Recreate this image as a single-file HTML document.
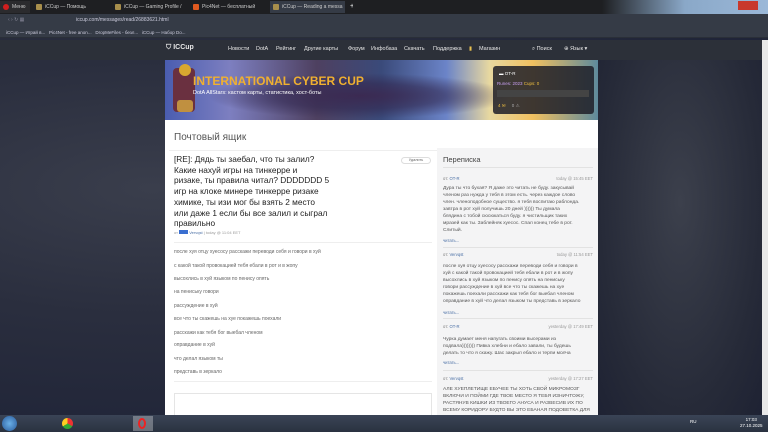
<!DOCTYPE html>
<html><head><meta charset="utf-8"><style>
*{margin:0;padding:0;box-sizing:border-box}
body{width:768px;height:432px;overflow:hidden;font-family:"Liberation Sans","DejaVu Sans",sans-serif;background:#23283a;position:relative}
.abs{position:absolute}
.bg{left:0;top:37px;width:762px;height:378px;background:radial-gradient(ellipse at 20% 40%,#3a3e4c 0%,#2a2e3e 40%,#1b2035 100%)}
.bgr{left:598px;top:60px;width:164px;height:355px;background:radial-gradient(ellipse at 50% 40%,#3c404c,#262a38 70%,#1e2233)}
.tabs{left:0;top:0;width:768px;height:14px;background:#1e1f22}
.tab{position:absolute;top:1px;height:12px;font-size:5px;color:#ccc;line-height:12px;padding-left:12px;white-space:nowrap;overflow:hidden}
.tab i{position:absolute;left:3px;top:3px;width:6px;height:6px;border-radius:1px;background:#a88f4c}
.addr{left:0;top:14px;width:768px;height:13px;background:#353b46;font-size:5px;color:#ccd;line-height:13px}
.bm{left:0;top:27px;width:768px;height:11px;background:#353b46;font-size:4.5px;color:#ccd;line-height:11px;border-bottom:1px solid #2a2f38}
.nav{left:0;top:40px;width:762px;height:20px;background:#2c3039}
.nav span{position:absolute;top:6px;font-size:5.5px;color:#e6e6e6}
.banner{left:165px;top:60px;width:433px;height:60px;background:linear-gradient(90deg,#4a5db0 0%,#7d7fc0 15%,#4e4060 35%,#3a4a7a 50%,#6b84c8 65%,#e8d8a0 75%,#f0c060 85%,#5e8a9c 100%);overflow:hidden}
.main{left:165px;top:120px;width:433px;height:295px;background:#fff}
.side{left:437px;top:148px;width:161px;height:267px;background:#f4f4f5}
.msg{font-size:5px;color:#666;position:absolute;left:174px;line-height:6px;white-space:nowrap}
.si{position:absolute;left:443px;width:152px;font-size:4.9px;color:#555;line-height:7px;white-space:nowrap}
.sh{position:absolute;left:443px;width:150px;font-size:4.2px;color:#777}
.sh b{font-weight:normal;color:#4a6fa5}
.sh em{font-style:normal;float:right;color:#999}
.rd{position:absolute;left:443px;font-size:4.2px;color:#4a6fa5}
.ln{position:absolute;left:443px;width:150px;height:1px;background:#e2e2e2}
.task{left:0;top:415px;width:768px;height:17px;background:linear-gradient(#3a4456,#2a3240)}
</style></head><body>
<div class="abs bg"></div><div class="abs bgr"></div>
<div class="abs tabs">
<div class="tab" style="left:0;width:30px;background:#2b2b2e"><i style="background:#d01e1e;border-radius:50%"></i>Меню</div>
<div class="tab" style="left:33px;width:75px"><i></i>iCCup — Помощь</div>
<div class="tab" style="left:112px;width:75px"><i></i>iCCup — Gaming Profile /</div>
<div class="tab" style="left:190px;width:75px"><i style="background:#e05a20"></i>Pic4Net — бесплатный</div>
<div class="tab" style="left:270px;width:75px;background:#353b46"><i></i>iCCup — Reading a messa</div>
<div class="tab" style="left:348px;color:#fff;font-size:7px;padding-left:2px">+</div>
<div class="abs" style="left:353px;top:0;width:415px;height:14px;background:linear-gradient(90deg,#1e1f22,#1e1f22 60%,#8aa8c8 80%,#9bb8d8)"></div>
<div class="abs" style="left:738px;top:1px;width:20px;height:9px;background:#c8382c"></div>
</div>
<div class="abs addr"><span style="position:absolute;left:8px;color:#889">‹ › ↻ ▦</span><span style="position:absolute;left:76px">iccup.com/messages/read/26883621.html</span></div>
<div class="abs bm"><span style="position:absolute;left:6px">iCCup — Играй в... &nbsp; Pic4Net - free anon... &nbsp; DropMeFiles - безл... &nbsp; iCCup — Набор Do...</span></div>
<div class="abs nav">
<span style="left:166px;font-size:7px;top:4px;font-weight:bold">⛉ ICCup</span>
<span style="left:228px">Новости</span><span style="left:256px">DotA</span><span style="left:276px">Рейтинг</span><span style="left:304px">Другие карты</span><span style="left:348px">Форум</span><span style="left:371px">Инфобаза</span><span style="left:404px">Скачать</span><span style="left:433px">Поддержка</span><span style="left:469px;color:#e8c050">▮</span><span style="left:479px">Магазин</span>
<span style="left:532px">⌕ Поиск</span><span style="left:564px">⊕ Язык ▾</span>
</div>
<div class="abs banner">
<div class="abs" style="left:0;top:0;width:433px;height:60px;background:radial-gradient(ellipse at 45% 60%,#3b2a52 0%,rgba(50,40,80,.6) 25%,transparent 45%)"></div>
<div class="abs" style="left:8px;top:8px;width:22px;height:44px;background:#6a3040;border-radius:4px"></div>
<div class="abs" style="left:14px;top:4px;width:12px;height:12px;border-radius:50%;background:#d8a830"></div>
<div class="abs" style="left:12px;top:40px;width:16px;height:12px;border-radius:3px;background:#c09040"></div>
<div class="abs" style="left:28px;top:14px;font-size:12px;font-weight:bold;color:#f0b030;white-space:nowrap">INTERNATIONAL CYBER CUP</div>
<div class="abs" style="left:28px;top:30px;font-size:5.5px;color:#fff;white-space:nowrap">DotA AllStars: кастом карты, статистика, хост-боты</div>
<div class="abs" style="left:328px;top:6px;width:101px;height:48px;background:rgba(30,30,40,.85);border-radius:3px;font-size:4.5px;color:#fff">
<div style="position:absolute;left:6px;top:5px">▬ OT-R</div>
<div style="position:absolute;left:4px;top:15px;color:#c8a0f0">Runes: 2023 <span style="color:#f0c040">Cups: 0</span></div>
<div style="position:absolute;left:4px;top:24px;width:92px;height:7px;background:#444"></div>
<div style="position:absolute;left:5px;top:37px;color:#f0c040">4 ✉ &nbsp;&nbsp;&nbsp; <span style="color:#aaa">0 ⚠</span></div>
</div>
</div>
<div class="abs main">
<div class="abs" style="left:9px;top:12px;font-size:10px;color:#555">Почтовый ящик</div>
<div class="abs" style="left:4px;top:30px;width:429px;height:1px;background:#eee"></div>
<div class="abs" style="left:9px;top:34px;font-size:8.3px;line-height:10.7px;color:#222;white-space:nowrap">[RE]: Дядь ты заебал, что ты залил?<br>Какие нахуй игры на тинкерре и<br>ризаке, ты правила читал? DDDDDDD 5<br>игр на клоке минере тинкерре ризаке<br>химике, ты изи мог бы взять 2 место<br>или даже 1 если бы все залил и сыграл<br>правильно</div>
<div class="abs" style="left:9px;top:110px;font-size:4px;color:#999">от <span style="display:inline-block;width:9px;height:4px;background:#3a6fd0"></span> <span style="color:#4a6fa5">Vervqst</span> | today @ 11:04 EET</div>
<div class="abs" style="left:236px;top:37px;width:30px;height:7px;border:1px solid #ddd;border-radius:4px;font-size:3.8px;color:#666;text-align:center;line-height:5px">Удалить</div>
<div class="abs" style="left:9px;top:122px;width:258px;height:1px;background:#eee"></div>
<div class="abs" style="left:9px;top:261px;width:258px;height:1px;background:#eee"></div>
<div class="abs" style="left:9px;top:273px;width:258px;height:30px;border:1px solid #e5e5e5"></div>
</div>
<div class="msg" style="top:249px">после хуя отцу хуесосу расскажи переводи себя и говори в хуй</div>
<div class="msg" style="top:263px">с какой такой провокацией тебя ебали в рот и в жопу</div>
<div class="msg" style="top:276px">высохлись в хуй языком по пенису опять</div>
<div class="msg" style="top:289px">на пениську говори</div>
<div class="msg" style="top:303px">рассуждение в хуй</div>
<div class="msg" style="top:316px">все что ты скажешь на хуе покажешь поехали</div>
<div class="msg" style="top:330px">расскажи как тебя бог выебал членом</div>
<div class="msg" style="top:342px">оправдание в хуй</div>
<div class="msg" style="top:356px">что делал языком ты</div>
<div class="msg" style="top:369px">представь в зеркало</div>
<div class="abs side">
<div class="abs" style="left:6px;top:7px;font-size:7.5px;color:#444">Переписка</div>
<div class="abs" style="left:6px;top:19px;width:150px;height:1px;background:#e2e2e2"></div>
</div>
<div class="sh" style="top:176px">от: <b>OT-R</b><em>today @ 15:45 EET</em></div>
<div class="si" style="top:185px">Дура ты что бухая? Я даже это читать не буду. закусывай<br>членом раз нужда у тебя в этом есть. через каждое слово<br>член. членоподобное существо. я тебя воспитаю раблонда.<br>завтра в рот хуй получишь 20 дней )))))) Ты думала<br>блядина с тобой сюсюкаться буду. я чистильщик таких<br>мразей как ты. Заблейняк хуесос. Спал конец тебе в рот.<br>Слитый.</div>
<div class="rd" style="top:238px">читать...</div>
<div class="ln" style="top:247px"></div>
<div class="sh" style="top:252px">от: <b>Vervqst</b><em>today @ 11:54 EET</em></div>
<div class="si" style="top:263px">после хуя отцу хуесосу расскажи переводи себя и говори в<br>хуй с какой такой провокацией тебя ебали в рот и в жопу<br>высохлись в хуй языком по пенису опять на пениську<br>говори рассуждение в хуй все что ты скажешь на хуе<br>покажешь поехали расскажи как тебя бог выебал членом<br>оправдание в хуй что делал языком ты представь в зеркало</div>
<div class="rd" style="top:310px">читать...</div>
<div class="ln" style="top:318px"></div>
<div class="sh" style="top:324px">от: <b>OT-R</b><em>yesterday @ 17:49 EET</em></div>
<div class="si" style="top:336px">Чурка думает меня напугать своими высерами из<br>подвала)))))))) Пивка хлебни и ебало завали, ты будешь<br>делать то что я скажу. Шас закрыл ебало и терпи молча</div>
<div class="rd" style="top:360px">читать...</div>
<div class="ln" style="top:370px"></div>
<div class="sh" style="top:376px">от: <b>Vervqst</b><em>yesterday @ 17:27 EET</em></div>
<div class="si" style="top:386px">АЛЕ ХУЕПЛЕТИЩЕ ЕБУЧЕЕ ТЫ ХОТЬ СВОЙ МИКРОМОЗГ<br>ВКЛЮЧИ И ПОЙМИ ГДЕ ТВОЕ МЕСТО Я ТЕБЯ ИЗНИЧТОЖУ,<br>РАСТЯНУВ КИШКИ ИЗ ТВОЕГО АНУСА И РАЗВЕСИВ ИХ ПО<br>ВСЕМУ КОРИДОРУ БУДТО ВЫ ЭТО ЕБАНАЯ ПОДОВЕТКА ДЛЯ</div>
<div class="abs" style="left:762px;top:40px;width:6px;height:375px;background:#e8e8e8"></div>
<div class="abs task">
<div class="abs" style="left:2px;top:1px;width:15px;height:15px;border-radius:50%;background:radial-gradient(#6ab0e8,#2a5a9a)"></div>
<div class="abs" style="left:62px;top:3px;width:11px;height:11px;border-radius:50%;background:conic-gradient(#e33 0 33%,#3a3 0 66%,#fc2 0)"></div>
<div class="abs" style="left:133px;top:1px;width:20px;height:15px;background:rgba(255,255,255,.3)"></div>
<div class="abs" style="left:138px;top:3px;width:8px;height:11px;border:2px solid #e22;border-radius:50%"></div>
<div class="abs" style="left:690px;top:4px;font-size:4.5px;color:#fff">RU</div>
<div class="abs" style="left:740px;top:2px;font-size:4.5px;color:#fff;text-align:center;line-height:6px">17:03<br>27.10.2025</div>
</div>
</body></html>
